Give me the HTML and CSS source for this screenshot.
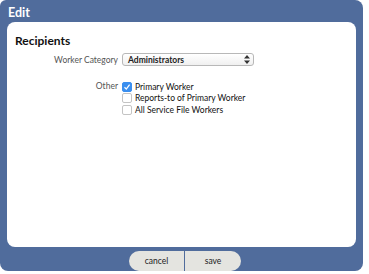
FILE: index.html
```html
<!DOCTYPE html>
<html lang="en">
<head>
    <meta charset="UTF-8">
    <meta name="viewport" content="width=device-width, initial-scale=1.0">
    <title>Edit</title>
    <link rel="stylesheet" href="styles.css">
</head>
<body>
    <div class="dialog">
        <div class="dialog-title">Edit</div>
        <div class="dialog-body">
            <h3>Recipients</h3>
            <div class="row">
                <label class="row-label" for="category">Worker Category</label>
                <div class="select-box">
                    <span>Administrators</span>
                    <svg width="6" height="9" viewBox="0 0 6 9"><path d="M3 0L6 3.5H0Z M3 9L0 5.5H6Z" fill="#333"/></svg>
                </div>
            </div>
            <div class="row other-row">
                <span class="row-label">Other</span>
                <div class="checks">
                    <label class="check"><span class="box checked"><svg width="8" height="8" viewBox="0 0 8 8"><path d="M1.5 4.3L3.3 6.1L6.6 1.6" fill="none" stroke="#fff" stroke-width="1.3"/></svg></span>Primary Worker</label>
                    <label class="check"><span class="box"></span>Reports-to of Primary Worker</label>
                    <label class="check"><span class="box"></span>All Service File Workers</label>
                </div>
            </div>
        </div>
        <div class="dialog-buttons">
            <button type="button" class="btn-left">cancel</button>
            <button type="button" class="btn-right">save</button>
        </div>
    </div>
</body>
</html>
```

FILE: styles.css
```css
body {
    margin: 0;
    font-family: Lato, "Open Sans", sans-serif;
    background: #fff;
}
.dialog {
    width: 363px;
    height: 271px;
    background-color: #506c9c;
    border-radius: 6px 8px 8px 8px;
    display: flex;
    flex-direction: column;
}
.dialog-title {
    color: #fff;
    font-weight: bold;
    font-size: 12.5px;
    height: 22px;
    line-height: 25px;
    padding-left: 8px;
}
.dialog-body {
    background: #fff;
    margin: 0 7px;
    height: 225px;
    border-radius: 8px;
    padding: 0 8px;
}
.dialog-body h3 {
    font-size: 12px;
    line-height: 13px;
    margin: 0;
    padding: 12px 0 6px 0;
    color: #111;
}
.row {
    display: flex;
    align-items: center;
}
.row-label {
    width: 103px;
    text-align: right;
    padding-right: 4px;
    font-size: 8.5px;
    color: #555;
}
.select-box {
    width: 122px;
    height: 11px;
    border: 1px solid #b8b8b8;
    border-radius: 3px;
    padding: 0 3px 0 5px;
    display: flex;
    align-items: center;
    justify-content: space-between;
    font-size: 8.5px;
    font-weight: bold;
    color: #222;
    background: linear-gradient(#fff, #f0f0f0);
}
.other-row {
    align-items: flex-start;
    margin-top: 15px;
}
.other-row .row-label {
    line-height: 11.5px;
}
.checks {
    display: flex;
    flex-direction: column;
}
.check {
    display: flex;
    align-items: center;
    font-size: 8.5px;
    color: #111;
    height: 11.5px;
}
.box {
    width: 8px;
    height: 8px;
    border: 1px solid #c4c4c4;
    border-radius: 2px;
    margin-right: 3px;
    background: #fff;
    display: flex;
    align-items: center;
    justify-content: center;
}
.box.checked {
    background: #3b8fef;
    border-color: #3b8fef;
}
.dialog-buttons {
    display: flex;
    justify-content: center;
    padding: 4px 0 0 7px;
}
button {
    width: 56px;
    height: 20px;
    border: none;
    background-color: #e4e4e0;
    font-family: Lato, sans-serif;
    font-size: 8.5px;
    color: #222;
    padding: 0;
    cursor: pointer;
}
.btn-left {
    border-radius: 10px 0 0 10px;
    border-right: 1px solid #506c9c;
}
.btn-right {
    border-radius: 0 10px 10px 0;
}
```
